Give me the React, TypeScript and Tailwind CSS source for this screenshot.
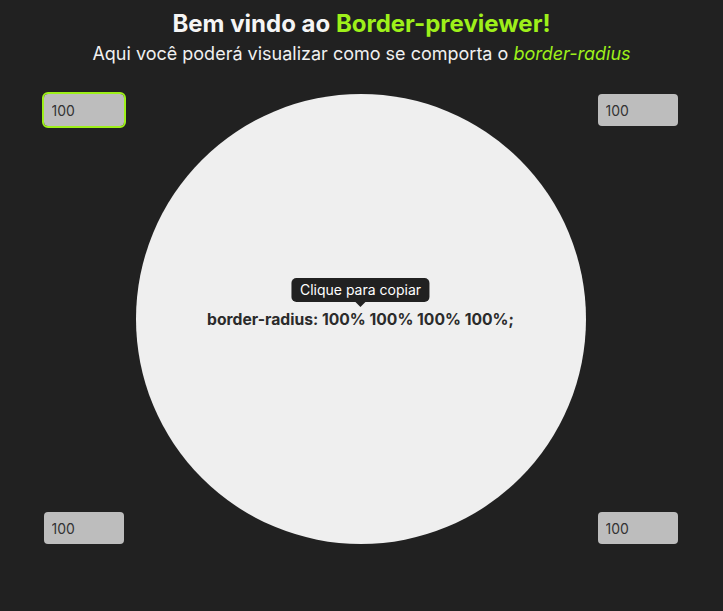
import React from "react";

const Box = ({ focused }: { focused?: boolean }) => (
  <input
    defaultValue="100"
    className={
      focused
        ? "w-[80px] h-[32px] rounded-[4px] bg-[#bdbdbd] px-2 text-[14px] text-[#333] outline-2 outline-[#9ef01a] outline-solid"
        : "w-[80px] h-[32px] rounded-[4px] bg-[#bdbdbd] px-2 text-[14px] text-[#333] outline-none"
    }
    style={{ fontFamily: "Inter, sans-serif" }}
  />
);

export default function App() {
  return (
    <div
      className="min-h-[611px] w-full bg-[#212121] flex flex-col items-center"
      style={{ fontFamily: "Inter, 'Noto Sans', sans-serif" }}
    >
      <h1 className="mt-[8px] text-[24px] leading-[32px] font-bold text-[#f5f5f5]">
        Bem vindo ao <span className="text-[#9ef01a]">Border-previewer!</span>
      </h1>
      <p className="mt-[1px] text-[18px] leading-[26px] text-[#f0f0f0]">
        Aqui você poderá visualizar como se comporta o{" "}
        <em className="text-[#9ef01a]">border-radius</em>
      </p>
      <div className="mt-[27px] flex gap-[12px] pr-[2px]">
        <div className="flex flex-col justify-between h-[450px]">
          <Box focused />
          <Box />
        </div>
        <div className="w-[450px] h-[450px] rounded-full bg-[#efefef] flex items-center justify-center">
          <div className="relative flex flex-col items-center">
            <div className="absolute bottom-[30px] left-1/2 -translate-x-1/2 whitespace-nowrap rounded-[5px] bg-[#212121] px-[8px] h-[24px] flex items-center text-[14px] text-white">
              Clique para copiar
              <span className="absolute left-1/2 -translate-x-1/2 top-full w-0 h-0 border-l-[5px] border-r-[5px] border-t-[5px] border-l-transparent border-r-transparent border-t-[#212121]" />
            </div>
            <span className="text-[15.7px] font-bold text-[#2b2b2b] mt-[2px]">
              border-radius: 100% 100% 100% 100%;
            </span>
          </div>
        </div>
        <div className="flex flex-col justify-between h-[450px]">
          <Box />
          <Box />
        </div>
      </div>
    </div>
  );
}
